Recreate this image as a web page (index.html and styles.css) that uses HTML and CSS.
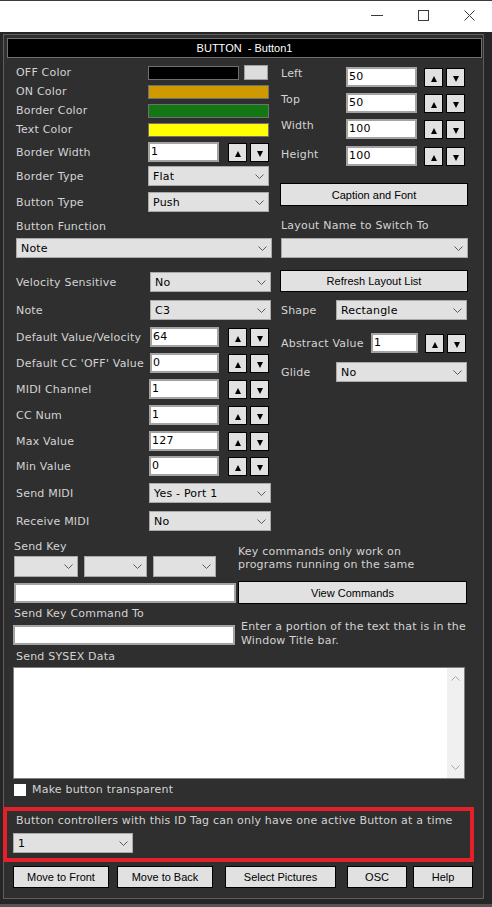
FILE: index.html
```html
<!DOCTYPE html>
<html>
<head>
<meta charset="utf-8">
<link rel="stylesheet" href="styles.css">
</head>
<body>
<div class="window">
  <div class="titlebar">
    <div class="cap"><svg width="12" height="10" viewBox="0 0 12 10"><line x1="0" y1="5.5" x2="12" y2="5.5" stroke="#3a3a3a" stroke-width="1"/></svg></div>
    <div class="cap"><svg width="11" height="11" viewBox="0 0 11 11"><rect x="0.5" y="0.5" width="10" height="10" fill="none" stroke="#3a3a3a" stroke-width="1"/></svg></div>
    <div class="cap"><svg width="11" height="11" viewBox="0 0 11 11"><path d="M0.5 0.5L10.5 10.5M10.5 0.5L0.5 10.5" stroke="#3a3a3a" stroke-width="1" fill="none"/></svg></div>
  </div>
  <div class="body">
    <div class="panel">
      <div class="header">BUTTON&nbsp; - Button1</div>
      <div class="cols">
        <div class="left">
          <div class="crow"><span class="lbl w132">OFF Color</span><div class="sw sw-off"></div><div class="sw sw-wh"></div></div>
          <div class="crow"><span class="lbl w132">ON Color</span><div class="sw sw-on"></div></div>
          <div class="crow"><span class="lbl w132">Border Color</span><div class="sw sw-bd"></div></div>
          <div class="crow"><span class="lbl w132">Text Color</span><div class="sw sw-tx"></div></div>

          <div class="row mt3"><span class="lbl w132">Border Width</span><div class="inp w71">1</div><div class="spin ml9"><div class="sb"><i class="up"></i></div><div class="sb"><i class="dn"></i></div></div></div>
          <div class="row mt4"><span class="lbl w132">Border Type</span><div class="sel w121"><span>Flat</span><svg class="chev" width="9" height="5" viewBox="0 0 9 5"><polyline points="0.5,0.5 4.5,4.5 8.5,0.5" fill="none" stroke="#5a5a5a" stroke-width="1"/></svg></div></div>
          <div class="row mt6"><span class="lbl w132">Button Type</span><div class="sel w121"><span>Push</span><svg class="chev" width="9" height="5" viewBox="0 0 9 5"><polyline points="0.5,0.5 4.5,4.5 8.5,0.5" fill="none" stroke="#5a5a5a" stroke-width="1"/></svg></div></div>

          <div class="lbl lh14 mt8">Button Function</div>
          <div class="sel wfull mt4"><span>Note</span><svg class="chev" width="9" height="5" viewBox="0 0 9 5"><polyline points="0.5,0.5 4.5,4.5 8.5,0.5" fill="none" stroke="#5a5a5a" stroke-width="1"/></svg></div>

          <div class="row mt14"><span class="lbl w134">Velocity Sensitive</span><div class="sel w121"><span>No</span><svg class="chev" width="9" height="5" viewBox="0 0 9 5"><polyline points="0.5,0.5 4.5,4.5 8.5,0.5" fill="none" stroke="#5a5a5a" stroke-width="1"/></svg></div></div>
          <div class="row mt8"><span class="lbl w134">Note</span><div class="sel w121"><span>C3</span><svg class="chev" width="9" height="5" viewBox="0 0 9 5"><polyline points="0.5,0.5 4.5,4.5 8.5,0.5" fill="none" stroke="#5a5a5a" stroke-width="1"/></svg></div></div>
          <div class="row mt7"><span class="lbl w134">Default Value/Velocity</span><div class="inp w69">64</div><div class="spin ml9"><div class="sb"><i class="up"></i></div><div class="sb"><i class="dn"></i></div></div></div>
          <div class="row mt6"><span class="lbl w134">Default CC 'OFF' Value</span><div class="inp w69">0</div><div class="spin ml9"><div class="sb"><i class="up"></i></div><div class="sb"><i class="dn"></i></div></div></div>
          <div class="row mt6"><span class="lbl w133">MIDI Channel</span><div class="inp w70">1</div><div class="spin ml9"><div class="sb"><i class="up"></i></div><div class="sb"><i class="dn"></i></div></div></div>
          <div class="row mt6"><span class="lbl w133">CC Num</span><div class="inp w70">1</div><div class="spin ml9"><div class="sb"><i class="up"></i></div><div class="sb"><i class="dn"></i></div></div></div>
          <div class="row mt6"><span class="lbl w133">Max Value</span><div class="inp w70">127</div><div class="spin ml9"><div class="sb"><i class="up"></i></div><div class="sb"><i class="dn"></i></div></div></div>
          <div class="row mt5"><span class="lbl w133">Min Value</span><div class="inp w70">0</div><div class="spin ml9"><div class="sb"><i class="up"></i></div><div class="sb"><i class="dn"></i></div></div></div>
          <div class="row mt7"><span class="lbl w133">Send MIDI</span><div class="sel w122"><span>Yes - Port 1</span><svg class="chev" width="9" height="5" viewBox="0 0 9 5"><polyline points="0.5,0.5 4.5,4.5 8.5,0.5" fill="none" stroke="#5a5a5a" stroke-width="1"/></svg></div></div>
          <div class="row mt8"><span class="lbl w133">Receive MIDI</span><div class="sel w122"><span>No</span><svg class="chev" width="9" height="5" viewBox="0 0 9 5"><polyline points="0.5,0.5 4.5,4.5 8.5,0.5" fill="none" stroke="#5a5a5a" stroke-width="1"/></svg></div></div>
        </div>

        <div class="right">
          <div class="row mt4"><span class="lbl w66 pl1 top">Left</span><div class="inp w71">50</div><div class="spin ml7"><div class="sb"><i class="up"></i></div><div class="sb"><i class="dn"></i></div></div></div>
          <div class="row mt6"><span class="lbl w66 pl1 top">Top</span><div class="inp w71">50</div><div class="spin ml7"><div class="sb"><i class="up"></i></div><div class="sb"><i class="dn"></i></div></div></div>
          <div class="row mt6"><span class="lbl w66 pl1 top">Width</span><div class="inp w71">100</div><div class="spin ml7"><div class="sb"><i class="up"></i></div><div class="sb"><i class="dn"></i></div></div></div>
          <div class="row mt7"><span class="lbl w66 pl1 top top2">Height</span><div class="inp w71">100</div><div class="spin ml7"><div class="sb"><i class="up"></i></div><div class="sb"><i class="dn"></i></div></div></div>

          <div class="btn h23 wfull mt17">Caption and Font</div>

          <div class="lbl lh14 pl1 mt13">Layout Name to Switch To</div>
          <div class="sel w187 ml1 mt5"><span></span><svg class="chev" width="9" height="5" viewBox="0 0 9 5"><polyline points="0.5,0.5 4.5,4.5 8.5,0.5" fill="none" stroke="#5a5a5a" stroke-width="1"/></svg></div>

          <div class="btn wfull mt12">Refresh Layout List</div>

          <div class="row mt8"><span class="lbl w56 pl1">Shape</span><div class="sel w131"><span>Rectangle</span><svg class="chev" width="9" height="5" viewBox="0 0 9 5"><polyline points="0.5,0.5 4.5,4.5 8.5,0.5" fill="none" stroke="#5a5a5a" stroke-width="1"/></svg></div></div>
          <div class="row mt13"><span class="lbl w91 pl1">Abstract Value</span><div class="inp w47">1</div><div class="spin ml7"><div class="sb"><i class="up"></i></div><div class="sb"><i class="dn"></i></div></div></div>
          <div class="row mt9"><span class="lbl w56 pl1">Glide</span><div class="sel w131"><span>No</span><svg class="chev" width="9" height="5" viewBox="0 0 9 5"><polyline points="0.5,0.5 4.5,4.5 8.5,0.5" fill="none" stroke="#5a5a5a" stroke-width="1"/></svg></div></div>
        </div>
      </div>

      <div class="lower">
        <div class="keyrow">
          <div class="keyleft">
            <div class="lbl lh14">Send Key</div>
            <div class="keysels">
              <div class="sel h21 w64"><span></span><svg class="chev" width="9" height="5" viewBox="0 0 9 5"><polyline points="0.5,0.5 4.5,4.5 8.5,0.5" fill="none" stroke="#5a5a5a" stroke-width="1"/></svg></div>
              <div class="sel h21 w63"><span></span><svg class="chev" width="9" height="5" viewBox="0 0 9 5"><polyline points="0.5,0.5 4.5,4.5 8.5,0.5" fill="none" stroke="#5a5a5a" stroke-width="1"/></svg></div>
              <div class="sel h21 w63"><span></span><svg class="chev" width="9" height="5" viewBox="0 0 9 5"><polyline points="0.5,0.5 4.5,4.5 8.5,0.5" fill="none" stroke="#5a5a5a" stroke-width="1"/></svg></div>
            </div>
          </div>
          <div class="note keytext">Key commands only work on<br>programs running on the same</div>
        </div>

        <div class="cmdrow">
          <div class="inp w222 mt2"></div>
          <div class="btn h23 w229 ml2">View Commands</div>
        </div>

        <div class="lbl lh12 mt4">Send Key Command To</div>
        <div class="torow">
          <div class="inp w222 mln1 mt5"></div>
          <div class="note totext">Enter a portion of the text that is in the<br>Window Title bar.</div>
        </div>

        <div class="lbl lh14 pl2 mt2">Send SYSEX Data</div>
        <div class="ta mt3">
          <div class="ta-body"></div>
          <div class="sbar">
            <svg width="9" height="5" viewBox="0 0 9 5"><polyline points="0.5,4.5 4.5,0.5 8.5,4.5" fill="none" stroke="#a6a6a6" stroke-width="1"/></svg>
            <svg width="9" height="5" viewBox="0 0 9 5"><polyline points="0.5,0.5 4.5,4.5 8.5,0.5" fill="none" stroke="#a6a6a6" stroke-width="1"/></svg>
          </div>
        </div>

        <div class="checkrow">
          <div class="cb"></div>
          <span class="lbl cblbl">Make button transparent</span>
        </div>

        <div class="redbox">
          <div class="lbl lh14 pl3">Button controllers with this ID Tag can only have one active Button at a time</div>
          <div class="sel w120 mt5"><span>1</span><svg class="chev" width="9" height="5" viewBox="0 0 9 5"><polyline points="0.5,0.5 4.5,4.5 8.5,0.5" fill="none" stroke="#5a5a5a" stroke-width="1"/></svg></div>
        </div>

        <div class="btnrow">
          <div class="btn w96">Move to Front</div>
          <div class="btn w96 ml8">Move to Back</div>
          <div class="btn w111 ml12">Select Pictures</div>
          <div class="btn w60 ml11">OSC</div>
          <div class="btn w60 ml6">Help</div>
        </div>
      </div>
    </div>
    <div class="strip"></div>
  </div>
</div>
</body>
</html>
```

FILE: styles.css
```css
* { box-sizing: border-box; }

body {
  margin: 0;
  background: #262626;
  font-family: "DejaVu Sans", Verdana, sans-serif;
  font-size: 11px;
  letter-spacing: 0.2px;
}

.window {
  width: 492px;
  height: 907px;
  overflow: hidden;
  background: #262626;
}

.titlebar {
  height: 32px;
  border-top: 1px solid #3c3c3c;
  background: #ffffff;
  display: flex;
  justify-content: flex-end;
}

.cap {
  width: 46px;
  height: 31px;
  padding-top: 9px;
  display: flex;
  justify-content: center;
  align-items: flex-start;
}

.body {
  height: 875px;
  padding: 2px 0 0 3px;
}

.panel {
  width: 481px;
  height: 865px;
  border: 1px solid #5e5e5e;
  background: #2f2f2f;
}

.strip {
  width: 492px;
  height: 4px;
  margin: 5px 0 0 -3px;
  background: #545454;
}

.header {
  margin: 3px 1px 0 3px;
  height: 20px;
  border: 1px solid #707070;
  background: #000;
  color: #fff;
  font-family: "Liberation Sans", Arial, sans-serif;
  font-size: 11px;
  letter-spacing: 0;
  line-height: 18px;
  text-align: center;
}

.cols {
  display: flex;
  gap: 8px;
  margin-top: 5px;
  padding-left: 12px;
}

.left { width: 256px; flex: none; }
.right { width: 188px; flex: none; }

.lbl {
  color: #d3d3d3;
  white-space: nowrap;
  flex: none;
}

.top {
  align-self: flex-start;
  line-height: 14px;
}
.top2 { margin-top: 2px; }

.note {
  color: #d3d3d3;
  white-space: nowrap;
}

.crow {
  display: flex;
  align-items: center;
  height: 19px;
}

.row {
  display: flex;
  align-items: center;
  height: 20px;
}

.sw {
  height: 14px;
  border: 1px solid #707070;
  flex: none;
}
.sw-off { width: 91px; background: #000; }
.sw-wh { width: 24px; height: 15px; margin-left: 5px; background: #dcdcdc; border-color: #a0a0a0; }
.sw-on { width: 121px; background: #cf9a00; }
.sw-bd { width: 121px; background: #137813; }
.sw-tx { width: 121px; background: #ffff00; }

.inp {
  height: 20px;
  background: #fff;
  border: 2px solid #a3a3a3;
  color: #000;
  padding-left: 1px;
  line-height: 16px;
  flex: none;
}

.sel {
  height: 20px;
  background: #e1e1e1;
  border: 1px solid #a9a9a9;
  color: #000;
  display: flex;
  align-items: center;
  justify-content: space-between;
  padding: 0 4px 0 4px;
  flex: none;
}
.chev { flex: none; }

.spin {
  display: flex;
  gap: 3px;
  align-self: flex-end;
  flex: none;
}

.sb {
  width: 19px;
  height: 19px;
  background: #e1e1e1;
  border: 1px solid #000;
  display: flex;
  align-items: center;
  justify-content: center;
}

.up {
  width: 0;
  height: 0;
  border-left: 3.5px solid transparent;
  border-right: 3.5px solid transparent;
  border-bottom: 6px solid #000;
  margin-top: 2px;
}

.dn {
  width: 0;
  height: 0;
  border-left: 3.5px solid transparent;
  border-right: 3.5px solid transparent;
  border-top: 6px solid #000;
  margin-top: 2px;
}

.btn {
  height: 22px;
  background: #e1e1e1;
  border: 1px solid #000;
  color: #000;
  font-family: "Liberation Sans", Arial, sans-serif;
  font-size: 11px;
  letter-spacing: 0;
  display: flex;
  align-items: center;
  justify-content: center;
  flex: none;
}

/* lower part */
.lower {
  margin-top: 9px;
  padding-left: 10px;
}

.keyrow { display: flex; }
.keyleft { width: 224px; flex: none; }
.keysels {
  display: flex;
  gap: 6px;
  margin-top: 2px;
}
.keytext {
  padding-top: 5px;
  line-height: 13px;
}

.cmdrow {
  display: flex;
  align-items: flex-start;
  margin-top: 4px;
}

.torow {
  display: flex;
  align-items: flex-start;
}
.totext {
  margin-left: 6px;
  line-height: 14px;
}

.ta {
  display: flex;
  width: 452px;
  height: 112px;
  margin-left: -1px;
  border: 1px solid #7f7f7f;
  background: #fff;
}
.ta-body { flex: 1; }
.sbar {
  width: 17px;
  background: #f0f0f0;
  display: flex;
  flex-direction: column;
  justify-content: space-between;
  align-items: center;
  padding: 8px 0 8px 0;
}

.checkrow {
  display: flex;
  align-items: center;
  height: 12px;
  margin-top: 5px;
}
.cb {
  width: 12px;
  height: 12px;
  background: #fff;
  flex: none;
}
.cblbl {
  margin-left: 6px;
  line-height: 12px;
}

.redbox {
  width: 471px;
  margin: 11px 0 0 -11px;
  border: 4px solid #e2212b;
  padding: 3px 0 5px 6px;
}

.btnrow {
  display: flex;
  margin-top: 4px;
  margin-left: -1px;
}

/* sizes */
.wfull { width: 100%; }
.w47 { width: 47px; }
.w56 { width: 56px; }
.w60 { width: 60px; }
.w63 { width: 63px; }
.w64 { width: 64px; }
.w66 { width: 66px; }
.w69 { width: 69px; }
.w70 { width: 70px; }
.w71 { width: 71px; }
.w91 { width: 91px; }
.w96 { width: 96px; }
.w111 { width: 111px; }
.w120 { width: 120px; }
.w121 { width: 121px; }
.w122 { width: 122px; }
.w131 { width: 131px; }
.w132 { width: 132px; }
.w133 { width: 133px; }
.w134 { width: 134px; }
.w187 { width: 187px; }
.w222 { width: 222px; }
.w229 { width: 229px; }
.h21 { height: 21px; }
.h23 { height: 23px; }
.lh12 { line-height: 12px; }
.lh14 { line-height: 14px; }

.pl1 { padding-left: 1px; }
.pl2 { padding-left: 2px; }
.pl3 { padding-left: 3px; }

.ml1 { margin-left: 1px; }
.ml2 { margin-left: 2px; }
.ml6 { margin-left: 6px; }
.ml7 { margin-left: 7px; }
.ml8 { margin-left: 8px; }
.ml9 { margin-left: 9px; }
.ml11 { margin-left: 11px; }
.ml12 { margin-left: 12px; }
.mln1 { margin-left: -1px; }

.mt2 { margin-top: 2px; }
.mt3 { margin-top: 3px; }
.mt4 { margin-top: 4px; }
.mt5 { margin-top: 5px; }
.mt6 { margin-top: 6px; }
.mt7 { margin-top: 7px; }
.mt8 { margin-top: 8px; }
.mt9 { margin-top: 9px; }
.mt12 { margin-top: 12px; }
.mt13 { margin-top: 13px; }
.mt14 { margin-top: 14px; }
.mt17 { margin-top: 17px; }
```
